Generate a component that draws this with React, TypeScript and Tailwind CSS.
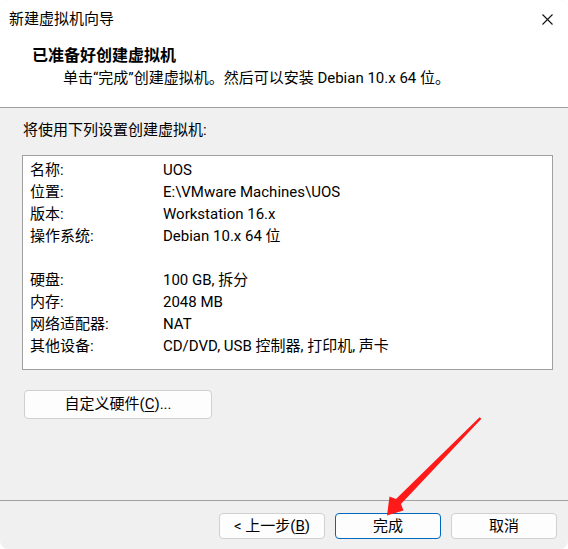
import React from 'react';

const rows: [string, string][] = [
  ['名称:', 'UOS'],
  ['位置:', 'E:\\VMware Machines\\UOS'],
  ['版本:', 'Workstation 16.x'],
  ['操作系统:', 'Debian 10.x 64 位'],
  ['', ''],
  ['硬盘:', '100 GB, 拆分'],
  ['内存:', '2048 MB'],
  ['网络适配器:', 'NAT'],
  ['其他设备:', 'CD/DVD, USB 控制器, 打印机, 声卡'],
];

function WinButton({ children, primary, className = '' }: { children: React.ReactNode; primary?: boolean; className?: string }) {
  return (
    <div
      className={`flex items-center justify-center rounded-[4px] border bg-[#fdfdfd] text-black ${
        primary ? 'border-[#0067c0]' : 'border-[#d0d0d0]'
      } ${className}`}
    >
      {children}
    </div>
  );
}

export default function App() {
  return (
    <div
      className="relative w-[568px] h-[549px] bg-white text-black text-[15px]"
      style={{ fontFamily: "Roboto, 'Noto Sans CJK SC', sans-serif" }}
    >
      <div className="h-full rounded-[8px] overflow-hidden flex flex-col bg-[#f0f0f0]">
        {/* title bar */}
        <div className="h-[38px] bg-white flex items-center justify-between pl-[9px] pr-[15px] pt-[1px]">
          <span className="text-[15px] leading-none">新建虚拟机向导</span>
          <svg width="11" height="11" viewBox="0 0 11 11">
            <path d="M0.5 0.5 L10.5 10.5 M10.5 0.5 L0.5 10.5" stroke="#111" strokeWidth="1.1" />
          </svg>
        </div>

        {/* header */}
        <div className="h-[70px] bg-white border-b border-[#a0a0a0] pt-[7px]">
          <div className="pl-[32px] h-[22px] leading-[22px] text-[16px] font-bold">已准备好创建虚拟机</div>
          <div className="pl-[63px] h-[22px] leading-[22px]">单击“完成”创建虚拟机。然后可以安装 Debian 10.x 64 位。</div>
        </div>

        {/* body */}
        <div className="flex-1 px-[22px] pt-[12px] pr-[15px]">
          <div className="h-[20px] leading-[20px] pl-[1px]">将使用下列设置创建虚拟机:</div>
          <div className="mt-[15px] border border-[#a0a0a0] bg-white pt-[3px] pb-[12px]">
            {rows.map(([k, v], i) => (
              <div key={i} className="flex h-[22px] leading-[22px]">
                <span className="w-[140px] pl-[7px] shrink-0">{k}</span>
                <span>{v}</span>
              </div>
            ))}
          </div>
          <WinButton className="mt-[20px] ml-[2px] w-[188px] h-[29px]">
            自定义硬件(<span className="underline underline-offset-2">C</span>)...
          </WinButton>
        </div>

        {/* footer */}
        <div className="h-[49px] border-t border-[#a0a0a0] flex justify-end items-start pt-[12px] pr-[11px] gap-[10px]">
          <WinButton className="w-[106px] h-[26px]">
            &lt; 上一步(<span className="underline underline-offset-2">B</span>)
          </WinButton>
          <WinButton primary className="w-[106px] h-[26px]">完成</WinButton>
          <WinButton className="w-[106px] h-[26px]">取消</WinButton>
        </div>
      </div>

      {/* red annotation arrow */}
      <svg className="absolute inset-0 pointer-events-none" width="568" height="549" viewBox="0 0 568 549">
        <polygon
          points="481.4,418.8 401,503.9 403.5,510.5 387,515.5 389.5,496.5 396,499.1 479.6,417.2"
          fill="#ff1a1a"
        />
      </svg>
    </div>
  );
}
